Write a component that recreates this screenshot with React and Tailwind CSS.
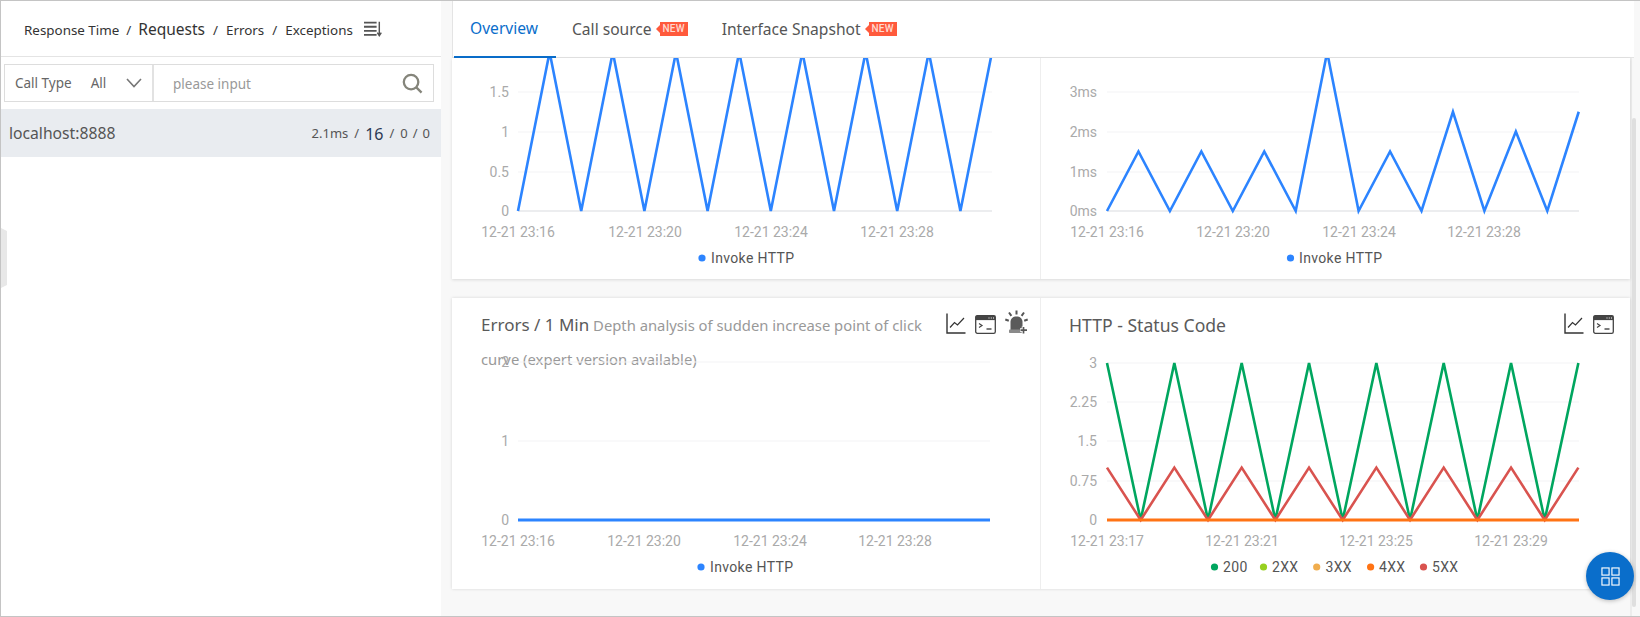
const BLUE = "#2c84ff";
const GREEN = "#00a65f";
const RED = "#d9534f";
const ORANGE = "#ff7314";

function pts(x0, step, y0, unit, values) {
  return values.map((v, i) => `${x0 + i * step},${y0 - v * unit}`).join(" ");
}

function ChartIcon() {
  return (
    <svg width="20" height="21" viewBox="0 0 20 21" fill="none" stroke="#333" className="block">
      <path d="M1 0.5V20H19.5" strokeWidth="1.4" />
      <path d="M4 14.5L8.5 9.5L11.5 12L18 5" strokeWidth="1.2" />
    </svg>
  );
}

function TerminalIcon() {
  return (
    <svg width="21" height="19" viewBox="0 0 21 19" fill="none" className="block">
      <rect x="0.7" y="0.7" width="19.6" height="17.6" rx="1.6" stroke="#444" strokeWidth="1.3" />
      <rect x="0.7" y="0.7" width="19.6" height="4.4" fill="#444" />
      <path d="M13.5 3H14.5M15.8 3H16.8M18 3H19" stroke="#fff" strokeWidth="1" />
      <path d="M4 8.5L7 10.5L4 12.5" stroke="#444" strokeWidth="1.2" />
      <path d="M11.5 14H16.5" stroke="#444" strokeWidth="1.4" />
    </svg>
  );
}

function AlarmIcon() {
  return (
    <svg width="23" height="24" viewBox="0 0 23 24" fill="none" className="block">
      <path d="M5.5 20V12C5.5 8.5 8 6.5 11.5 6.5C15 6.5 17.5 8.5 17.5 12V20Z" fill="#5a5a5a" />
      <rect x="4" y="19.5" width="15" height="3.5" rx="0.8" fill="#8a8a8a" />
      <path d="M11.5 0.5V4.5M4 2.5L6.4 5.8M19 2.5L16.6 5.8M0.3 9.5L3.8 10.8M22.7 9.5L19.2 10.8" stroke="#555" strokeWidth="2" />
      <path d="M18.5 16.5V23.5M15 20H22" stroke="#fff" strokeWidth="3.6" />
      <path d="M18.5 17V23.5M15.5 20.2H22" stroke="#555" strokeWidth="1.7" />
    </svg>
  );
}

function NewBadge() {
  return (
    <span className="flex items-center ml-[4px] -mt-[1px]">
      <svg width="4" height="8" viewBox="0 0 4 8" className="block">
        <path d="M4 0V8L0 4Z" fill="#ff5a3c" />
      </svg>
      <span className="w-[28px] h-[14px] bg-[#ff5a3c] text-[#ffd9d0] text-[10px] leading-[14px] text-center font-['Roboto',sans-serif] font-medium tracking-[0.3px]">NEW</span>
    </span>
  );
}

function Grid({ x1, x2, ys, base }) {
  return (
    <g>
      {ys.map((y) => (
        <line key={y} x1={x1} x2={x2} y1={y} y2={y} stroke="#f3f4f6" strokeWidth="1.2" />
      ))}
      {base && <line x1={x1} x2={x2} y1={base} y2={base} stroke="#e6e7ea" strokeWidth="1.4" />}
    </g>
  );
}

function YLabels({ x, items }) {
  return items.map(([t, y]) => (
    <text key={t} x={x} y={y + 5} textAnchor="end" className="fill-[#aaaaaa] text-[14px]">{t}</text>
  ));
}

function XLabels({ y, items }) {
  return items.map(([t, x]) => (
    <text key={t} x={x} y={y} textAnchor="middle" className="fill-[#aaaaaa] text-[14px]">{t}</text>
  ));
}

function Legend({ y, items }) {
  return items.map(([t, cx, tx, c]) => (
    <g key={t}>
      <circle cx={cx} cy={y} r="3.6" fill={c} />
      <text x={tx} y={y + 5} className="fill-[#555555] text-[14px] tracking-[0.35px]">{t}</text>
    </g>
  ));
}

function TopLeftChart() {
  const v = Array.from({ length: 16 }, (_, i) => (i % 2 ? 2 : 0));
  return (
    <svg viewBox="452 58 588 221" className="block w-[588px] h-[221px] font-['Roboto',sans-serif]">
      <Grid x1={518} x2={992} ys={[92, 132, 172]} base={211} />
      <YLabels x={509} items={[["1.5", 92], ["1", 132], ["0.5", 172], ["0", 211]]} />
      <polyline points={pts(518, 31.6, 211, 79.4, v)} fill="none" stroke={BLUE} strokeWidth="2.6" />
      <XLabels y={237} items={[["12-21 23:16", 518], ["12-21 23:20", 645], ["12-21 23:24", 771], ["12-21 23:28", 897]]} />
      <Legend y={258} items={[["Invoke HTTP", 702, 711, BLUE]]} />
    </svg>
  );
}

function TopRightChart() {
  const v = [0, 1.5, 0, 1.5, 0, 1.5, 0, 4, 0, 1.5, 0, 2.5, 0, 2, 0, 2.5];
  return (
    <svg viewBox="1041 58 589 221" className="block w-[589px] h-[221px] font-['Roboto',sans-serif]">
      <Grid x1={1107} x2={1579} ys={[92, 132, 172]} base={211} />
      <YLabels x={1097} items={[["3ms", 92], ["2ms", 132], ["1ms", 172], ["0ms", 211]]} />
      <polyline points={pts(1107, 31.45, 211, 39.7, v)} fill="none" stroke={BLUE} strokeWidth="2.6" />
      <XLabels y={237} items={[["12-21 23:16", 1107], ["12-21 23:20", 1233], ["12-21 23:24", 1359], ["12-21 23:28", 1484]]} />
      <Legend y={258} items={[["Invoke HTTP", 1290.5, 1299, BLUE]]} />
    </svg>
  );
}

function BottomLeftChart() {
  return (
    <svg viewBox="452 348 588 241" className="block w-[588px] h-[241px] font-['Roboto',sans-serif]">
      <Grid x1={518} x2={990} ys={[362, 441]} />
      <YLabels x={509} items={[["2", 362], ["1", 441], ["0", 520]]} />
      <line x1={518} x2={990} y1={520} y2={520} stroke={BLUE} strokeWidth="3" />
      <XLabels y={546} items={[["12-21 23:16", 518], ["12-21 23:20", 644], ["12-21 23:24", 770], ["12-21 23:28", 895]]} />
      <Legend y={567} items={[["Invoke HTTP", 701, 710, BLUE]]} />
    </svg>
  );
}

function BottomRightChart() {
  const big = Array.from({ length: 15 }, (_, i) => (i % 2 ? 0 : 3));
  const small = Array.from({ length: 15 }, (_, i) => (i % 2 ? 0 : 1));
  return (
    <svg viewBox="1041 348 589 241" className="block w-[589px] h-[241px] font-['Roboto',sans-serif]">
      <Grid x1={1107} x2={1579} ys={[363, 402, 441, 481]} />
      <YLabels x={1097} items={[["3", 363], ["2.25", 402], ["1.5", 441], ["0.75", 481], ["0", 520]]} />
      <polyline points={pts(1107, 33.67, 520, 52.33, big)} fill="none" stroke={GREEN} strokeWidth="2.6" />
      <polyline points={pts(1107, 33.67, 520, 52.33, small)} fill="none" stroke={RED} strokeWidth="2.6" />
      <line x1={1107} x2={1579} y1={520} y2={520} stroke={ORANGE} strokeWidth="3" />
      <XLabels y={546} items={[["12-21 23:17", 1107], ["12-21 23:21", 1242], ["12-21 23:25", 1376], ["12-21 23:29", 1511]]} />
      <Legend
        y={567}
        items={[
          ["200", 1214.5, 1223, GREEN],
          ["2XX", 1263.5, 1272, "#97d01f"],
          ["3XX", 1316.7, 1325.5, "#f0ad4e"],
          ["4XX", 1370.6, 1379, ORANGE],
          ["5XX", 1423.5, 1432, RED],
        ]}
      />
    </svg>
  );
}

export default function App() {
  return (
    <div className="relative flex w-[1640px] h-[617px] overflow-hidden border-t border-b border-l border-[#c4c4c4] bg-white font-['Noto_Sans',sans-serif]">
      {/* sidebar */}
      <aside className="w-[440px] shrink-0 bg-white">
        <div className="flex items-center h-[56px] pl-[23px] pt-[3px] border-b border-[#e4e4e4] text-[#333] text-[13.4px] whitespace-nowrap">
          <span>Response Time</span>
          <span className="mx-[7px]">/</span>
          <span className="text-[15.5px]">Requests</span>
          <span className="mx-[8px]">/</span>
          <span>Errors</span>
          <span className="mx-[8px]">/</span>
          <span>Exceptions</span>
          <svg width="18" height="18" viewBox="0 0 20 18" fill="none" stroke="#555" className="ml-[11px] -mt-[3px] block">
            <path d="M0 2H14M0 6.5H14M0 11H14M0 15.5H14" strokeWidth="2" />
            <path d="M17 1V15M14.8 13L17 16.5L19.2 13" strokeWidth="1.6" />
          </svg>
        </div>
        <div className="flex items-center h-[38px] mt-[7px] ml-[3px] w-[430px] border border-[#dddddd]">
          <div className="flex items-center w-[149px] h-full pl-[10px] pt-[1px] border-r-2 border-[#e2e2e2] text-[13.5px] text-[#666]">
            <span>Call Type</span>
            <span className="ml-[19px]">All</span>
            <svg width="16" height="10" viewBox="0 0 16 10" fill="none" stroke="#777" strokeWidth="1.6" className="ml-[20px] -mt-[1px] block">
              <path d="M1 1L8 8.5L15 1" />
            </svg>
          </div>
          <input
            placeholder="please input"
            className="flex-1 min-w-0 h-full pl-[19px] pt-[2px] bg-transparent text-[13.5px] outline-none placeholder:text-[#999]"
          />
          <svg width="21" height="21" viewBox="0 0 22 22" fill="none" stroke="#85857b" strokeWidth="2.4" className="mr-[10px] block">
            <circle cx="9.5" cy="9.5" r="7.6" />
            <path d="M15 15L20.5 20.5" />
          </svg>
        </div>
        <div className="flex items-center justify-between h-[48px] mt-[7px] pl-[8px] pr-[11px] pt-[2px] bg-[#e9ecf0] text-[#555]">
          <span className="text-[15.7px]">localhost:8888</span>
          <span className="flex items-center text-[13px] text-[#555]">
            <span>2.1ms</span>
            <span className="mx-[6px]">/</span>
            <span className="text-[16px] text-[#2b3a55]">16</span>
            <span className="mx-[6px]">/</span>
            <span>0</span>
            <span className="mx-[5px]">/</span>
            <span>0</span>
          </span>
        </div>
      </aside>

      {/* gutter */}
      <div className="w-[11px] shrink-0 bg-[#f8f8f8]" />

      {/* main */}
      <main className="flex flex-col flex-1 min-w-0 bg-[#f8f8f8]">
        <nav className="flex items-stretch w-[1182px] h-[57px] shrink-0 pl-px bg-white border-l border-b border-[#e4e4e4] text-[15.6px] text-[#555] whitespace-nowrap">
          <div className="flex items-center w-[102px] h-[57px] pl-[16px] pt-[1px] border-b-2 border-[#0a6ecb] text-[#0a6ecb]">Overview</div>
          <div className="flex items-center ml-[16px] pt-[1px]">
            <span>Call source</span>
            <NewBadge />
          </div>
          <div className="flex items-center ml-[34px] pt-[1px]">
            <span>Interface Snapshot</span>
            <NewBadge />
          </div>
        </nav>

        <div className="flex flex-1 min-h-0">
          <div className="flex flex-col w-[1180px] shrink-0 border-r-2 border-[#ededed]">
            <section className="flex h-[221px] bg-white shadow-[0_1px_3px_rgba(0,0,0,0.12)]">
              <div className="w-[589px] border-r border-[#eeeeee] overflow-hidden">
                <TopLeftChart />
              </div>
              <div className="w-[589px] overflow-hidden">
                <TopRightChart />
              </div>
            </section>
            <section className="flex h-[291px] mt-[19px] bg-white shadow-[0_0_3px_rgba(0,0,0,0.14)]">
              <div className="w-[589px] border-r border-[#eeeeee]">
                <div className="flex justify-between h-[50px] pl-[29px] pr-[12px] pt-[12px]">
                  <div className="w-[452px] -mt-[2px] leading-[34px] text-[14.8px] text-[#999]">
                    <span className="text-[17px] text-[#5a5a5a]">Errors / 1 Min</span> Depth analysis of sudden increase point of click curve (expert version available)
                  </div>
                  <div className="flex items-start">
                    <div className="mt-[3px]"><ChartIcon /></div>
                    <div className="ml-[9px] mt-[5px]"><TerminalIcon /></div>
                    <div className="ml-[9px]"><AlarmIcon /></div>
                  </div>
                </div>
                <BottomLeftChart />
              </div>
              <div className="w-[589px]">
                <div className="flex justify-between h-[50px] pl-[28px] pr-[16px] pt-[12px]">
                  <div className="-mt-[2px] leading-[34px] text-[17.6px] text-[#5a5a5a]">HTTP - Status Code</div>
                  <div className="flex items-start">
                    <div className="mt-[3px]"><ChartIcon /></div>
                    <div className="ml-[9px] mt-[5px]"><TerminalIcon /></div>
                  </div>
                </div>
                <BottomRightChart />
              </div>
            </section>
          </div>
          <div className="flex-1 pt-[60px]">
            <div className="w-[4px] h-[489px] rounded-[2px] bg-[#dfdfdf]" />
          </div>
        </div>
      </main>

      {/* sidebar collapse handle */}
      <div className="absolute left-0 top-[227px] w-[6px] h-[60px] bg-[#e8e8e8] [clip-path:polygon(0_0,100%_5%,100%_95%,0_100%)]" />

      {/* floating button */}
      <button className="absolute left-[1585px] top-[551px] flex items-center justify-center w-[48px] h-[48px] rounded-full bg-[#0a6ecb] shadow-[0_1px_4px_rgba(0,0,0,0.25)]">
        <svg width="19" height="19" viewBox="0 0 20 20" fill="none" stroke="#fff" strokeWidth="1.2" className="block">
          <rect x="1" y="1" width="7.5" height="7.5" />
          <rect x="11.5" y="1" width="7.5" height="7.5" />
          <rect x="1" y="11.5" width="7.5" height="7.5" />
          <rect x="11.5" y="11.5" width="7.5" height="7.5" />
        </svg>
      </button>
    </div>
  );
}
